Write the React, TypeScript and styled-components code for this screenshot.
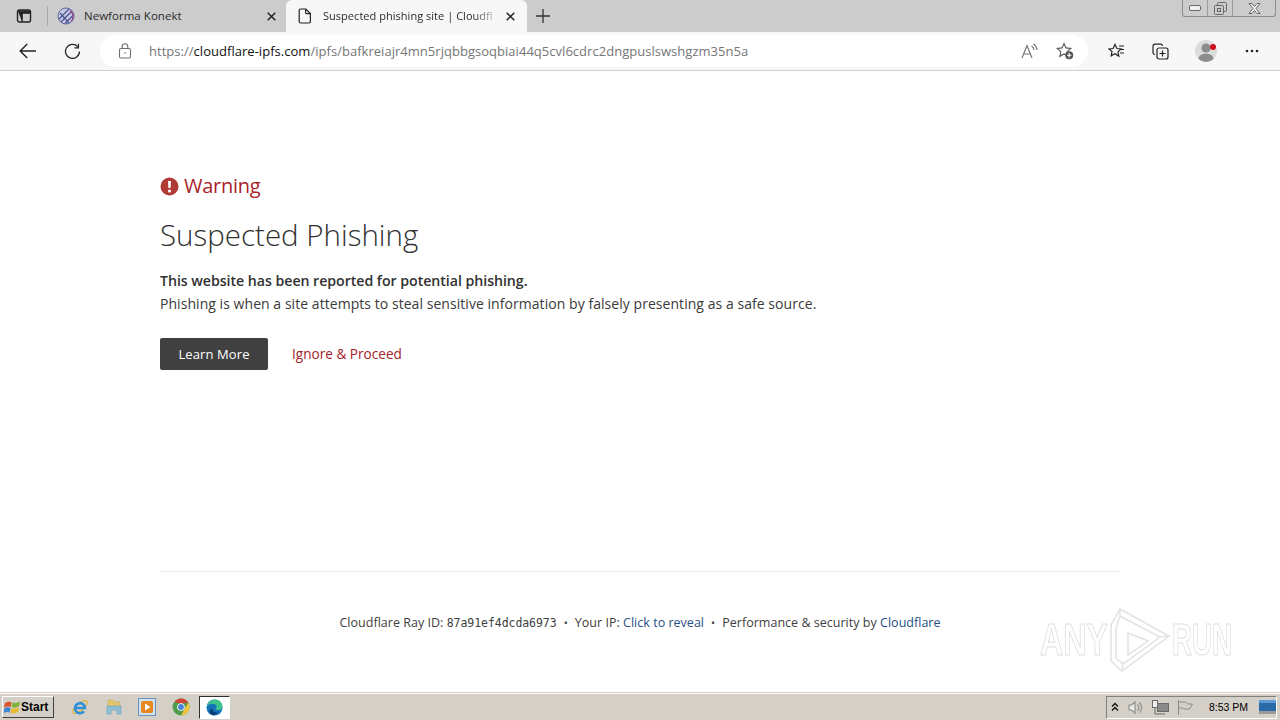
import styled, { createGlobalStyle } from "styled-components";

const GlobalStyle = createGlobalStyle`
    html, body {
        margin: 0;
        padding: 0;
        height: 100%;
        background: #ffffff;
        overflow: hidden;
    }
    #root {
        height: 720px;
    }
    * {
        box-sizing: border-box;
    }
`;

const Screen = styled.div`
    position: relative;
    display: flex;
    flex-direction: column;
    width: 1280px;
    height: 720px;
    font-family: "Open Sans", "Noto Sans", sans-serif;
    color: #313131;
`;

const TabStrip = styled.div`
    display: flex;
    align-items: flex-end;
    height: 32px;
    flex: none;
    background: #cccccc;
`;

const TabActions = styled.div`
    display: flex;
    align-items: center;
    width: 48px;
    height: 32px;
    padding-left: 16px;
    flex: none;
`;

const TabDivider = styled.div`
    width: 1px;
    height: 20px;
    margin-left: 15px;
    background: #a8a8a8;
`;

const Tab = styled.div<{ $active?: boolean }>`
    display: flex;
    align-items: center;
    width: ${(props) => (props.$active ? "241px" : "238px")};
    height: 32px;
    padding: 0 ${(props) => (props.$active ? "12px" : "10px")} 0 ${(props) => (props.$active ? "12px" : "9px")};
    flex: none;
    background: ${(props) => (props.$active ? "#f7f7f7" : "transparent")};
    border-radius: 6px 6px 0 0;
`;

const TabTitle = styled.div<{ $active?: boolean }>`
    flex: 1;
    margin: 0 0 2px ${(props) => (props.$active ? "11px" : "9px")};
    white-space: nowrap;
    font-size: ${(props) => (props.$active ? "11px" : "11.5px")};
    letter-spacing: 0.03px;
    color: #2b2b2b;
    ${(props) =>
        props.$active &&
        `mask-image: linear-gradient(to right, #000 150px, rgba(0, 0, 0, 0.15) 173px);`}
`;

const NewTab = styled.div`
    display: flex;
    align-items: center;
    margin-left: 9px;
    height: 32px;
`;

const WindowControls = styled.div`
    display: flex;
    align-self: flex-start;
    margin-left: auto;
    margin-right: 4px;
    height: 17px;
    border: 1px solid #8e8e8e;
    border-top: none;
    border-radius: 0 0 3px 3px;
`;

const WindowButton = styled.div<{ $width: number; $last?: boolean }>`
    display: flex;
    align-items: center;
    justify-content: center;
    width: ${(props) => props.$width}px;
    border-right: ${(props) => (props.$last ? "none" : "1px solid #9c9c9c")};
`;

const Toolbar = styled.div`
    display: flex;
    align-items: center;
    height: 39px;
    flex: none;
    padding-left: 18px;
    background: #f7f7f7;
    border-bottom: 1px solid #d0d0d0;
`;

const NavButton = styled.div<{ $gap: number }>`
    display: flex;
    width: 20px;
    flex: none;
    justify-content: center;
    margin-right: ${(props) => props.$gap}px;
`;

const AddressBar = styled.div`
    display: flex;
    align-items: center;
    width: 988px;
    height: 32px;
    flex: none;
    padding-left: 18px;
    background: #ffffff;
    border-radius: 16px;
`;

const AddressText = styled.div`
    flex: 1;
    margin-left: 17px;
    white-space: nowrap;
    font-size: 13px;
    letter-spacing: 0.03px;
    color: #767676;
`;

const AddressHost = styled.span`
    color: #111111;
`;

const AddressIcons = styled.div`
    display: flex;
    align-items: center;
    gap: 18px;
    padding-right: 14px;
`;

const ToolIcons = styled.div`
    display: flex;
    align-items: center;
    margin-left: 18px;
`;

const ToolSlot = styled.div<{ $width: number; $offset?: number }>`
    display: flex;
    justify-content: center;
    flex: none;
    width: ${(props) => props.$width}px;
    margin-left: ${(props) => props.$offset ?? 0}px;
`;

const Page = styled.main`
    flex: 1;
    padding: 103px 160px 0;
    background: #ffffff;
`;

const WarningRow = styled.div`
    display: flex;
    align-items: center;
    gap: 5px;
    height: 24px;
`;

const WarningLabel = styled.div`
    font-size: 20px;
    line-height: 24px;
    font-weight: 500;
    letter-spacing: -0.25px;
    color: #a9252b;
`;

const Title = styled.h1`
    margin: 18px 0 0;
    font-size: 29.5px;
    line-height: 38px;
    font-weight: 300;
    color: #313131;
`;

const Lead = styled.p`
    margin: 15px 0 0;
    font-size: 14.2px;
    line-height: 23px;
    font-weight: 600;
    letter-spacing: -0.05px;
    color: #313131;
`;

const Detail = styled.p`
    margin: 0;
    font-size: 14px;
    line-height: 23px;
    letter-spacing: 0.05px;
    color: #3a3a3a;
`;

const Actions = styled.div`
    display: flex;
    align-items: center;
    gap: 24px;
    margin-top: 23px;
`;

const LearnMore = styled.button`
    width: 108px;
    height: 32px;
    padding: 0;
    border: none;
    border-radius: 2px;
    background: #404040;
    color: #ffffff;
    font-family: inherit;
    font-size: 13px;
    letter-spacing: 0.1px;
`;

const IgnoreLink = styled.a`
    margin-bottom: 2px;
    font-size: 13.6px;
    color: #a3232a;
`;

const Footer = styled.footer`
    margin-top: 201px;
    padding-top: 42px;
    border-top: 1px solid #ececec;
    text-align: center;
    white-space: nowrap;
    font-size: 12.5px;
    line-height: 18px;
    letter-spacing: 0.02px;
    color: #404040;
`;

const Bullet = styled.span`
    margin: 0 7px;
    font-size: 11px;
`;

const FooterLink = styled.a`
    color: #1f4f82;
`;

const RayId = styled.span`
    font-family: "DejaVu Sans Mono", "Liberation Mono", monospace;
    font-size: 11.5px;
    letter-spacing: -0.05px;
`;

const Watermark = styled.div`
    position: absolute;
    left: 1040px;
    top: 608px;
    display: flex;
    align-items: center;
    gap: 7px;
    height: 64px;
    font-family: "Liberation Sans", sans-serif;
    font-size: 44px;
    font-weight: 700;
    color: #ffffff;
    -webkit-text-stroke: 1px #dedede;
    pointer-events: none;
`;

const WatermarkWord = styled.span<{ $width: number; $scale: number; $shift?: number }>`
    display: inline-block;
    width: ${(props) => props.$width}px;
    margin-left: ${(props) => props.$shift ?? 0}px;
    transform: scaleX(${(props) => props.$scale});
    transform-origin: left center;
    white-space: nowrap;
`;

const Taskbar = styled.div`
    display: flex;
    align-items: center;
    height: 28px;
    flex: none;
    padding: 1px 0 0 2px;
    background: #d4d0c8;
    border-top: 1px solid #d4d0c8;
    box-shadow: inset 0 1px 0 #ffffff;
`;

const StartButton = styled.button`
    display: flex;
    align-items: center;
    width: 52px;
    height: 22px;
    padding: 0 0 0 1px;
    border: 1px solid;
    border-color: #ffffff #404040 #404040 #ffffff;
    background: #d4d0c8;
    font-family: "Liberation Sans", sans-serif;
    font-size: 12px;
    font-weight: 700;
    color: #000000;
`;

const QuickLaunch = styled.div`
    display: flex;
    align-items: center;
    gap: 15.6px;
    margin-left: 17px;
`;

const ActiveApp = styled.div`
    display: flex;
    align-items: center;
    justify-content: center;
    width: 31px;
    height: 23px;
    margin-left: -6.6px;
    background: #ffffff;
    border: 1px solid;
    border-color: #303030 #ffffff #ffffff #303030;
`;

const Tray = styled.div`
    display: flex;
    align-items: center;
    gap: 8px;
    height: 23px;
    margin-left: auto;
    margin-right: 3px;
    padding: 0 0 0 3px;
    border: 1px solid;
    border-color: #808080 #ffffff #ffffff #808080;
`;

const Clock = styled.div`
    margin-left: 8px;
    margin-right: 3px;
    font-family: "Liberation Sans", sans-serif;
    font-size: 10.5px;
    color: #000000;
`;

const TabIcon = () => (
    <svg width="16" height="16" viewBox="0 0 16 16" fill="none" stroke="#222" strokeWidth="1.4">
        <rect x="1.5" y="2" width="13" height="12" rx="2" />
        <path d="M2 3.2h12v2H6.2v8.5" fill="#222" strokeWidth="1.2" />
    </svg>
);

const GlobeIcon = () => (
    <svg width="18" height="18" viewBox="0 0 18 18" fill="none">
        <circle cx="9" cy="9" r="8" fill="#c9c8e4" stroke="#5a6aa0" />
        <path d="M2 12 12 2M4 15 15 4M8 16.5 16.5 8M3 6l9 10" stroke="#49538f" strokeWidth="1.2" />
        <path d="M13 3.5a7.5 7.5 0 0 1 1 11" stroke="#a34a8e" strokeWidth="1.2" />
    </svg>
);

const CloseIcon = () => (
    <svg width="9" height="9" viewBox="0 0 9 9" stroke="#222" strokeWidth="1.5">
        <path d="M.7.7l7.6 7.6M8.3.7.7 8.3" />
    </svg>
);

const PageIcon = () => (
    <svg width="14" height="16" viewBox="0 0 14 16" fill="none" stroke="#222" strokeWidth="1.2">
        <path d="M2.6 1h5.2L12.4 5.6v8a1.4 1.4 0 0 1-1.4 1.4H2.6a1.4 1.4 0 0 1-1.4-1.4V2.4A1.4 1.4 0 0 1 2.6 1z" />
        <path d="M7.6 1v3.4a1.2 1.2 0 0 0 1.2 1.2h3.6" />
    </svg>
);

const PlusIcon = () => (
    <svg width="14" height="14" viewBox="0 0 14 14" stroke="#333" strokeWidth="1.3">
        <path d="M7 0v14M0 7h14" />
    </svg>
);

const BackIcon = () => (
    <svg width="18" height="16" viewBox="0 0 18 16" fill="none" stroke="#222" strokeWidth="1.4">
        <path d="M17 8H1.5M8.2 1 1.2 8l7 7" />
    </svg>
);

const ReloadIcon = () => (
    <svg width="17" height="17" viewBox="0 0 17 17" fill="none" stroke="#222" strokeWidth="1.3">
        <path d="M13.6 3.6A7 7 0 1 0 15.5 8.5" />
        <path d="M14.4.8v4h-4" />
    </svg>
);

const LockIcon = () => (
    <svg width="14" height="16" viewBox="0 0 14 16" fill="none" stroke="#6e6e6e" strokeWidth="1.1">
        <rect x="1.5" y="5.5" width="11" height="9.5" rx="1.5" />
        <path d="M4.2 5.5V3.6a2.8 2.8 0 0 1 5.6 0v1.9" />
        <circle cx="7" cy="10" r=".8" fill="#6e6e6e" stroke="none" />
    </svg>
);

const ReadAloudIcon = () => (
    <svg width="17" height="16" viewBox="0 0 17 16" fill="none" stroke="#777" strokeWidth="1.2">
        <path d="M1 15 6 2.500l5 12.500M2.800 11h6.400" />
        <path d="M10.500 3a5 5 0 0 1 2.500 4M12.500 1a8 8 0 0 1 3.500 6" />
    </svg>
);

const FavAddIcon = () => (
    <svg width="18" height="18" viewBox="0 0 18 18" fill="none" stroke="#555" strokeWidth="1.1">
        <path d="M8 1.5l2 4.4 4.8.5-3.6 3.2 1 4.7L8 11.9 3.8 14.3l1-4.7L1.2 6.4 6 5.9z" />
        <circle cx="13.2" cy="13.2" r="4" fill="#555" stroke="none" />
        <path d="M13.2 11v4.4M11 13.2h4.4" stroke="#fff" />
    </svg>
);

const FavoritesIcon = () => (
    <svg width="17" height="16" viewBox="0 0 17 16" fill="none" stroke="#222" strokeWidth="1.2">
        <path d="M7 1.5l1.900 4 4.100.5-3 2.900.8 4.400L7 10.700l-3.800 2.100.8-4.400L1 6l4.100-.5z" />
        <path d="M11 3h5M12.500 6.500H16M12 10h4" />
    </svg>
);

const CollectionsIcon = () => (
    <svg width="17" height="17" viewBox="0 0 17 17" fill="none" stroke="#222" strokeWidth="1.2">
        <path d="M3 11.5A2 2 0 0 1 1 9.500V3.200A2 2 0 0 1 3 1.200h5.500A2 2 0 0 1 10.500 3" />
        <rect x="5" y="5" width="11" height="11" rx="2" fill="#f7f7f7" />
        <path d="M10.500 7.500v6M7.500 10.500h6" />
    </svg>
);

const ProfileIcon = () => (
    <svg width="24" height="24" viewBox="0 0 24 24">
        <circle cx="12" cy="12" r="11" fill="#dcdcdc" />
        <circle cx="12" cy="9" r="4.600" fill="#8c8c8c" />
        <path d="M4.500 20a7.500 5.500 0 0 1 15 0 11 11 0 0 1-15 0z" fill="#8c8c8c" />
        <circle cx="19" cy="8" r="3" fill="#d01020" />
    </svg>
);

const MoreIcon = () => (
    <svg width="14" height="4" viewBox="0 0 14 4" fill="#222">
        <circle cx="2" cy="2" r="1.300" />
        <circle cx="7" cy="2" r="1.300" />
        <circle cx="12" cy="2" r="1.300" />
    </svg>
);

const MinimizeIcon = () => (
    <svg width="12" height="6" viewBox="0 0 12 6" fill="#f2f2f2" stroke="#666">
        <rect x=".5" y=".5" width="11" height="5" rx="1.500" />
    </svg>
);

const RestoreIcon = () => (
    <svg width="13" height="13" viewBox="0 0 13 13" fill="none" stroke="#666">
        <rect x="3.500" y=".5" width="9" height="9" rx="1" />
        <rect x=".5" y="3.500" width="9" height="9" rx="1" fill="#ccc" />
        <rect x="3.500" y="6.500" width="3" height="3" />
    </svg>
);

const WindowCloseIcon = () => (
    <svg width="13" height="11" viewBox="0 0 13 11" fill="#eee" stroke="#666">
        <path d="M1 .5h3l2.500 3 2.500-3h3L8 5.500l4 5H9L6.500 7.500 4 10.500H1l4-5z" />
    </svg>
);

const AlertIcon = () => (
    <svg width="19" height="19" viewBox="0 0 19 19">
        <circle cx="9.500" cy="9.500" r="9" fill="#b03a35" />
        <path d="M8 4h3l-.4 7H8.400z" fill="#fff" />
        <circle cx="9.500" cy="14" r="1.600" fill="#fff" />
    </svg>
);

const PlayMark = () => (
    <svg width="60" height="64" viewBox="0 0 60 64" fill="none" stroke="#e2e2e2" strokeWidth="1.500">
        <path d="M10 1 59 28 12 63 1 53V17z" />
        <path d="M10 8 50 29 13 56 6 50V20z" />
        <path d="M18 25 38 33 18 47z" />
        <path d="M10 1V8M59 28 50 29M12 63 13 56" />
    </svg>
);

const WindowsLogo = () => (
    <svg width="17" height="17" viewBox="0 0 18 17">
        <path d="M1 4c3-2 5-2 7-1L7 8C5 7 3 7 0 9z" fill="#d9532c" />
        <path d="M9 3c2 1 5 1 8-1l-1 5c-3 2-6 2-8 1z" fill="#7fb23a" />
        <path d="M0 10c3-2 5-2 7-1l-1 5c-2-1-4-1-7 1z" fill="#3f86d0" />
        <path d="M8 9c2 1 5 1 8-1l-1 5c-3 2-6 2-8 1z" fill="#e9b92f" />
    </svg>
);

const IeIcon = () => (
    <svg width="18" height="18" viewBox="0 0 18 18" fill="none">
        <ellipse cx="9" cy="9" rx="9" ry="3.500" transform="rotate(-40 9 9)" stroke="#e0b030" strokeWidth="1.200" />
        <path d="M4 10h10a5 5 0 1 0-1 3.200" stroke="#2f8fd8" strokeWidth="2.600" />
    </svg>
);

const FolderIcon = () => (
    <svg width="18" height="18" viewBox="0 0 18 18">
        <path d="M3 2h5l2 2h5v5H3z" fill="#e3c56c" stroke="#c9a94f" strokeWidth=".6" />
        <path d="M2 8h14v8h-4v-4H6v4H2z" fill="#8fbfd6" stroke="#6d9db8" strokeWidth=".6" />
    </svg>
);

const MediaIcon = () => (
    <svg width="18" height="18" viewBox="0 0 18 18">
        <rect x=".5" y=".5" width="17" height="17" fill="#cfe0ef" stroke="#6f93b8" />
        <rect x="3" y="3" width="12" height="12" rx="2" fill="#e8871f" />
        <path d="M7 5.500 12.500 9 7 12.500z" fill="#fff" />
    </svg>
);

const ChromeIcon = () => (
    <svg width="18" height="18" viewBox="0 0 18 18">
        <circle cx="9" cy="9" r="8.500" fill="#4f9d4a" />
        <path d="M9 .5a8.500 8.500 0 0 1 7.400 4.300L9 5.500 2.500 4A8.500 8.500 0 0 1 9 .5z" fill="#d6433a" />
        <path d="M16.400 4.800A8.500 8.500 0 0 1 9 17.500L12.500 11z" fill="#f0c53a" />
        <circle cx="9" cy="9" r="3.800" fill="#fff" />
        <circle cx="9" cy="9" r="2.900" fill="#4a82d8" />
    </svg>
);

const EdgeIcon = () => (
    <svg width="17" height="17" viewBox="0 0 17 17">
        <circle cx="8.500" cy="8.500" r="8" fill="#1572b6" />
        <path d="M.8 7.500C2 2.500 6 .5 9 .5c4.500 0 7.500 3.500 7.500 7 0 2.500-2 3.500-4 3.500-1.500 0-3-.5-3-1.500 1-.5 1.500-1.500 1-2.500C9.500 4.500 4 3.500.8 7.500z" fill="#3fc48c" />
        <path d="M6 9c0 3 2.500 5 6 4.500-1.500 2-4 3-6 2.500-2.500-1-3.500-5 0-7z" fill="#0c3f78" />
    </svg>
);

const TrayArrowIcon = () => (
    <svg width="10" height="10" viewBox="-1 0 10 10" fill="none" stroke="#111" strokeWidth="1.400">
        <path d="M1 4.500 4 1.500l3 3M1 8.500l3-3 3 3" />
    </svg>
);

const SpeakerIcon = () => (
    <svg width="16" height="15" viewBox="0 0 16 15" fill="none" stroke="#8a8a8a" strokeWidth="1.100">
        <path d="M1 5h2.500L7 2v11L3.500 10H1z" fill="#e8e8e8" />
        <path d="M9.500 4.500a4 4 0 0 1 0 6M11.500 2.500a7 7 0 0 1 0 10" />
    </svg>
);

const NetworkIcon = () => (
    <svg width="17" height="15" viewBox="0 0 17 15" stroke="#6a6a6a">
        <rect x="5.500" y="3.500" width="11" height="8" fill="#8a8a8a" />
        <rect x=".5" y=".5" width="5" height="7" fill="#f0f0f0" />
        <path d="M3 7.500v6.500h10" fill="none" />
    </svg>
);

const FlagIcon = () => (
    <svg width="16" height="15" viewBox="0 0 16 15" fill="none" stroke="#8a8a8a">
        <path d="M1.500 0v15M1.500 2h7l2 2h5l-3 5H7L5.500 8h-4" />
    </svg>
);

const DesktopIcon = () => (
    <svg width="17" height="14" viewBox="0 0 17 14">
        <rect width="17" height="11" fill="#2b6aa8" />
        <rect width="17" height="3" fill="#5d9ad4" />
        <rect y="11" width="17" height="3" fill="#9a9a9a" />
    </svg>
);

function App() {
    return (
        <Screen>
            <GlobalStyle />
            <TabStrip>
                <TabActions>
                    <TabIcon />
                    <TabDivider />
                </TabActions>
                <Tab>
                    <GlobeIcon />
                    <TabTitle>Newforma Konekt</TabTitle>
                    <CloseIcon />
                </Tab>
                <Tab $active>
                    <PageIcon />
                    <TabTitle $active>Suspected phishing site | Cloudfl</TabTitle>
                    <CloseIcon />
                </Tab>
                <NewTab>
                    <PlusIcon />
                </NewTab>
                <WindowControls>
                    <WindowButton $width={25}>
                        <MinimizeIcon />
                    </WindowButton>
                    <WindowButton $width={25}>
                        <RestoreIcon />
                    </WindowButton>
                    <WindowButton $width={42} $last>
                        <WindowCloseIcon />
                    </WindowButton>
                </WindowControls>
            </TabStrip>
            <Toolbar>
                <NavButton $gap={24}>
                    <BackIcon />
                </NavButton>
                <NavButton $gap={18}>
                    <ReloadIcon />
                </NavButton>
                <AddressBar>
                    <LockIcon />
                    <AddressText>
                        https://<AddressHost>cloudflare-ipfs.com</AddressHost>
                        /ipfs/bafkreiajr4mn5rjqbbgsoqbiai44q5cvl6cdrc2dngpuslswshgzm35n5a
                    </AddressText>
                    <AddressIcons>
                        <ReadAloudIcon />
                        <FavAddIcon />
                    </AddressIcons>
                </AddressBar>
                <ToolIcons>
                    <ToolSlot $width={20}>
                        <FavoritesIcon />
                    </ToolSlot>
                    <ToolSlot $width={68}>
                        <CollectionsIcon />
                    </ToolSlot>
                    <ToolSlot $width={24}>
                        <ProfileIcon />
                    </ToolSlot>
                    <ToolSlot $width={14} $offset={27}>
                        <MoreIcon />
                    </ToolSlot>
                </ToolIcons>
            </Toolbar>
            <Page>
                <WarningRow>
                    <AlertIcon />
                    <WarningLabel>Warning</WarningLabel>
                </WarningRow>
                <Title>Suspected Phishing</Title>
                <Lead>This website has been reported for potential phishing.</Lead>
                <Detail>Phishing is when a site attempts to steal sensitive information by falsely presenting as a safe source.</Detail>
                <Actions>
                    <LearnMore>Learn More</LearnMore>
                    <IgnoreLink>Ignore &amp; Proceed</IgnoreLink>
                </Actions>
                <Footer>
                    Cloudflare Ray ID: <RayId>87a91ef4dcda6973</RayId>
                    <Bullet>•</Bullet>
                    Your IP: <FooterLink>Click to reveal</FooterLink>
                    <Bullet>•</Bullet>
                    Performance &amp; security by <FooterLink>Cloudflare</FooterLink>
                </Footer>
            </Page>
            <Watermark>
                <WatermarkWord $width={63} $scale={0.73}>ANY</WatermarkWord>
                <PlayMark />
                <WatermarkWord $width={60} $scale={0.63} $shift={-5}>RUN</WatermarkWord>
            </Watermark>
            <Taskbar>
                <StartButton>
                    <WindowsLogo />
                    Start
                </StartButton>
                <QuickLaunch>
                    <IeIcon />
                    <FolderIcon />
                    <MediaIcon />
                    <ChromeIcon />
                    <ActiveApp>
                        <EdgeIcon />
                    </ActiveApp>
                </QuickLaunch>
                <Tray>
                    <TrayArrowIcon />
                    <SpeakerIcon />
                    <NetworkIcon />
                    <FlagIcon />
                    <Clock>8:53 PM</Clock>
                    <DesktopIcon />
                </Tray>
            </Taskbar>
        </Screen>
    );
}

export default App;
